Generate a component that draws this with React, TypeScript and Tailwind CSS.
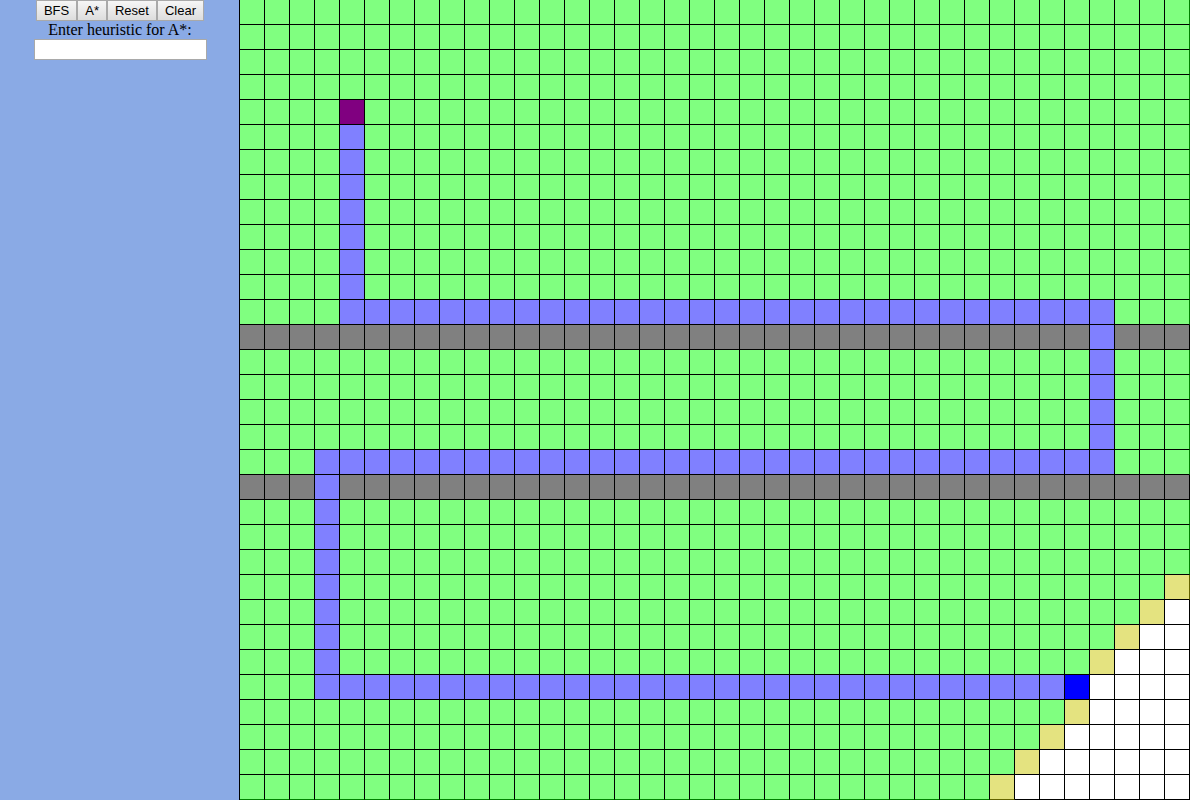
import { useState } from "react";

type Kind = "open" | "visited" | "frontier" | "path" | "wall" | "start" | "goal";

const COLS = 38;
const ROWS = 32;

const fill: Record<Kind, string> = {
  open: "bg-white",
  visited: "bg-[#80ff80]",
  frontier: "bg-[#e4e380]",
  path: "bg-[#8080ff]",
  wall: "bg-[#808080]",
  start: "bg-[#800080]",
  goal: "bg-[#0000ff]",
};

// Searched cells tint the outer line of the board.
const rightEdge: Partial<Record<Kind, string>> = {
  visited: "border-r-[#008000]",
  frontier: "border-r-[#646300]",
};

const bottomEdge: Partial<Record<Kind, string>> = {
  visited: "border-b-[#008000]",
  frontier: "border-b-[#646300]",
};

function onPath(r: number, c: number): boolean {
  return (
    (c === 4 && r > 4 && r <= 12) ||
    (r === 12 && c >= 4 && c <= 34) ||
    (c === 34 && r >= 12 && r <= 18) ||
    (r === 18 && c >= 3 && c <= 34) ||
    (c === 3 && r >= 18 && r <= 27) ||
    (r === 27 && c >= 3 && c < 33)
  );
}

function kindAt(r: number, c: number): Kind {
  if (r === 4 && c === 4) return "start";
  if (r === 27 && c === 33) return "goal";
  if (onPath(r, c)) return "path";
  if (r === 13 || r === 19) return "wall";
  if (r === 27) return c > 33 ? "open" : "visited";
  const diagonal = r < 27 ? 60 : 61;
  if (r + c === diagonal) return "frontier";
  return r + c > diagonal ? "open" : "visited";
}

function cellClass(r: number, c: number): string {
  const kind = kindAt(r, c);
  const right = (c === COLS - 1 && rightEdge[kind]) || "border-r-black";
  const bottom = (r === ROWS - 1 && bottomEdge[kind]) || "border-b-black";
  return `h-[25px] border-r border-b ${fill[kind]} ${right} ${bottom}`;
}

const cells = Array.from({ length: ROWS * COLS }, (_, i) => cellClass(Math.floor(i / COLS), i % COLS));

const buttonClass =
  "h-[21px] border border-[#a9a9a9] bg-linear-to-b from-[#f6f6f6] to-[#dddddd] px-[7px] font-['Liberation_Sans',sans-serif] text-[13px] leading-[19px] text-black";

export default function App() {
  const [heuristic, setHeuristic] = useState("");

  return (
    <div className="flex items-stretch bg-white pr-px">
      <aside className="flex min-w-0 flex-1 flex-col items-center bg-[#8aaae5] pl-px font-['Liberation_Serif',serif] text-black">
        <div className="flex">
          <button type="button" className={buttonClass}>BFS</button>
          <button type="button" className={buttonClass}>A*</button>
          <button type="button" className={buttonClass}>Reset</button>
          <button type="button" className={buttonClass}>Clear</button>
        </div>
        <label htmlFor="heuristic" className="text-base leading-[18px]">
          Enter heuristic for A*:
        </label>
        <input
          id="heuristic"
          type="text"
          value={heuristic}
          onChange={(e) => setHeuristic(e.target.value)}
          className="h-[21px] w-[173px] border border-[#a9a9a9] bg-white px-1 font-['Liberation_Sans',sans-serif] text-[13px] outline-none"
        />
      </aside>
      <main className="grid shrink-0 grid-cols-[repeat(38,25px)] border-l border-black">
        {cells.map((name, i) => (
          <div key={i} className={name} />
        ))}
      </main>
    </div>
  );
}
